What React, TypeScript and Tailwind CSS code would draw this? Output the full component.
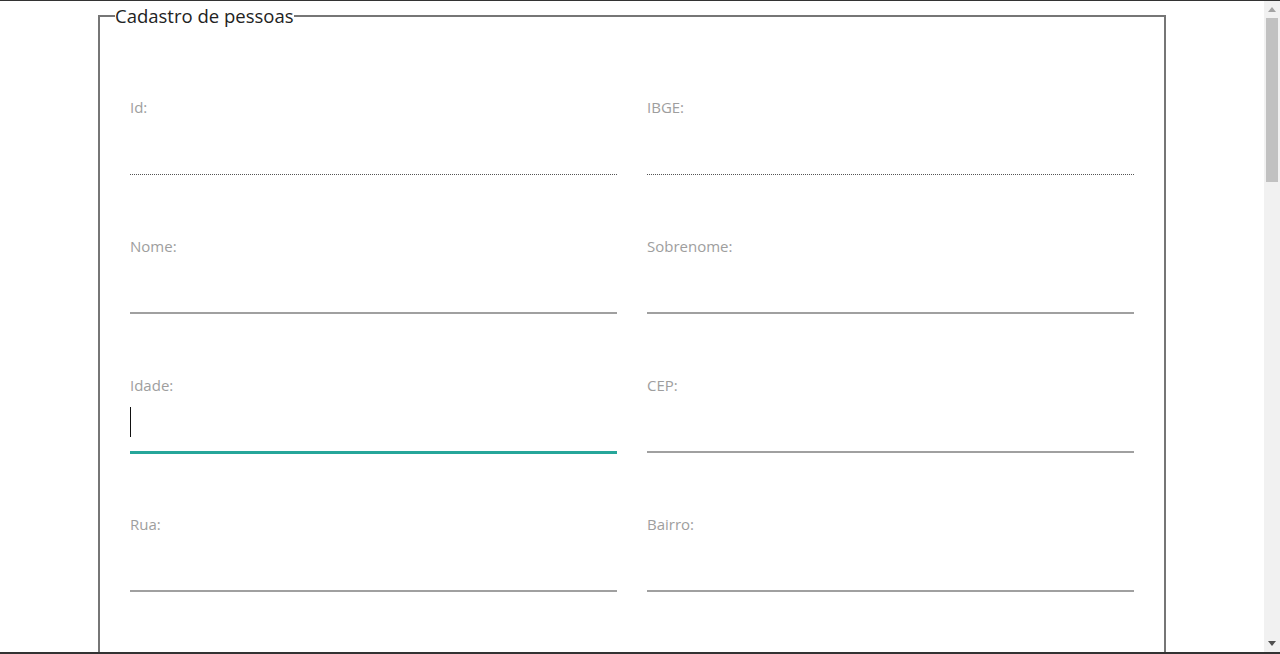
const FIELDS: { label: string; kind: 'disabled' | 'normal' | 'focused' }[] = [
  { label: 'Id:', kind: 'disabled' },
  { label: 'IBGE:', kind: 'disabled' },
  { label: 'Nome:', kind: 'normal' },
  { label: 'Sobrenome:', kind: 'normal' },
  { label: 'Idade:', kind: 'focused' },
  { label: 'CEP:', kind: 'normal' },
  { label: 'Rua:', kind: 'normal' },
  { label: 'Bairro:', kind: 'normal' },
]

function Field({ label, kind }: { label: string; kind: 'disabled' | 'normal' | 'focused' }) {
  return (
    <div className="flex flex-col">
      <label className="block text-[15px] leading-[20px] text-[#9e9e9e]">{label}</label>
      {kind === 'disabled' && <div className="h-[58px] border-b border-dotted border-[#555]" />}
      {kind === 'normal' && <div className="h-[58px] border-b-2 border-[#a0a0a0]" />}
      {kind === 'focused' && (
        <div className="flex h-[58px] items-center border-b-2 border-[#26a69a] pb-[2px] shadow-[0_1px_0_0_#26a69a]">
          <span className="block h-[30px] w-px bg-[#111]" />
        </div>
      )}
    </div>
  )
}

export default function App() {
  return (
    <div
      className="flex h-[654px] w-[1280px] overflow-hidden border-t border-b-2 border-[#333] bg-white"
      style={{ fontFamily: '"Open Sans", "Noto Sans", Arial, sans-serif' }}
    >
      {/* Page */}
      <div className="flex-1 overflow-hidden">
        <fieldset className="mx-auto mt-[3px] w-[1068px] border-2 border-[#767676] px-[15px]">
          <legend className="text-[18.5px] leading-[24px] text-[#222]">Cadastro de pessoas</legend>
          <div className="grid grid-cols-2 gap-x-[30px] gap-y-[61px] pt-[69px] pr-[15px] pb-[100px] pl-[15px]">
            {FIELDS.map((f) => (
              <Field key={f.label} label={f.label} kind={f.kind} />
            ))}
          </div>
        </fieldset>
      </div>

      {/* Scrollbar */}
      <div className="flex w-4 flex-col items-center bg-[#f1f1f1]">
        <div className="flex h-[17px] items-center justify-center">
          <svg width="8" height="5" viewBox="0 0 8 5">
            <path d="M0 5 L4 0 L8 5 Z" fill="#a3a3a3" />
          </svg>
        </div>
        <div className="h-[164px] w-3 bg-[#c1c1c1]" />
        <div className="flex-1" />
        <div className="flex h-[17px] items-center justify-center">
          <svg width="8" height="5" viewBox="0 0 8 5">
            <path d="M0 0 L8 0 L4 5 Z" fill="#505050" />
          </svg>
        </div>
      </div>
    </div>
  )
}
